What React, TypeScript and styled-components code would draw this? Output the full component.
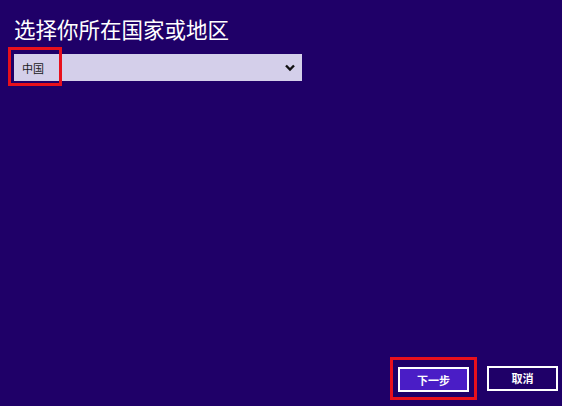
import React, {useState} from "react";
import styled, {createGlobalStyle} from "styled-components";

const GlobalStyle = createGlobalStyle`
  html, body {
    margin: 0;
    padding: 0;
    background: #1f0068;
  }
  * {
    box-sizing: border-box;
  }
`;

const FONT = `"Noto Sans CJK SC", "Noto Sans", sans-serif`;

const Page = styled.div`
  width: 562px;
  height: 406px;
  background: #1f0068;
  display: flex;
  flex-direction: column;
  padding: 15px 4px 14px 14px;
  font-family: ${FONT};
  overflow: hidden;
`;

const Title = styled.h1`
  margin: 0;
  color: #ffffff;
  font-size: 21.5px;
  font-weight: 400;
  letter-spacing: 0;
  line-height: 28px;
`;

const Field = styled.div`
  position: relative;
  margin-top: 11px;
  width: 288px;
`;

const SelectBox = styled.button`
  width: 100%;
  height: 27px;
  display: flex;
  align-items: center;
  justify-content: space-between;
  padding: 0 6px 0 8px;
  border: none;
  background: #d4cfea;
  color: #1a1a1a;
  font-family: ${FONT};
  font-size: 11px;
  cursor: pointer;
`;

const Highlight = styled.div<{ $left: number; $top: number; $w: number; $h: number }>`
  position: absolute;
  left: ${p => p.$left}px;
  top: ${p => p.$top}px;
  width: ${p => p.$w}px;
  height: ${p => p.$h}px;
  border: 3px solid #e8101c;
  pointer-events: none;
`;

const Footer = styled.div`
  margin-top: auto;
  display: flex;
  justify-content: flex-end;
  gap: 18px;
`;

const ButtonWrap = styled.div`
  position: relative;
`;

const ActionButton = styled.button<{ $primary?: boolean }>`
  width: 71px;
  height: 25px;
  border: 2px solid #ffffff;
  background: ${p => p.$primary ? "#4a1dc6" : "#1f0068"};
  color: #ffffff;
  font-family: ${FONT};
  font-size: 11px;
  font-weight: 700;
  cursor: pointer;
  padding: 0;
`;

function Chevron() {
  return (
    <svg width="12" height="9" viewBox="0 0 12 9">
      <path d="M2 2.5 L6 6.5 L10 2.5" fill="none" stroke="#111" strokeWidth="2.4" />
    </svg>
  );
}

export default function App() {
  const [region] = useState("中国");

  return <>
    <GlobalStyle />
    <Page>
      <Title>选择你所在国家或地区</Title>
      <Field>
        <SelectBox aria-label="国家或地区">
          <span>{region}</span>
          <Chevron />
        </SelectBox>
        <Highlight $left={-6} $top={-7} $w={54} $h={39} />
      </Field>
      <Footer>
        <ButtonWrap>
          <ActionButton $primary>下一步</ActionButton>
          <Highlight $left={-8} $top={-9} $w={87} $h={43} />
        </ButtonWrap>
        <ActionButton>取消</ActionButton>
      </Footer>
    </Page>
  </>
}
